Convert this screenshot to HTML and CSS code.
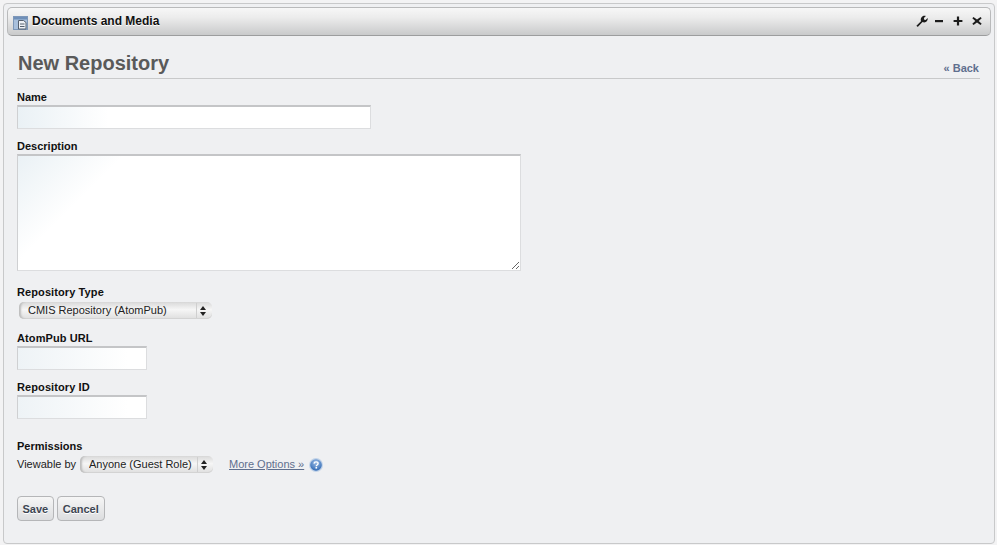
FILE: index.html
```html
<!DOCTYPE html>
<html lang="en">
<head>
<meta charset="utf-8">
<title>Documents and Media</title>
<link rel="stylesheet" href="styles.css">
</head>
<body>
<div class="portlet">
  <header class="titlebar">
    <div class="title">
      <svg class="portlet-icon" width="15" height="14" viewBox="0 0 15 14">
        <rect x="0.5" y="0.5" width="14" height="13" fill="#a9c0dc" stroke="#7d97b8"/>
        <rect x="1" y="1" width="13" height="2.500" fill="#6f8fb8"/>
        <path d="M5.500 4.500h5l2.500 2v6.500H5.500z" fill="#eef1f5" stroke="#55606e"/>
        <path d="M7 8h4.500M7 10.500h4.500" stroke="#55606e"/>
      </svg>
      <h1>Documents and Media</h1>
    </div>
    <div class="controls">
      <svg width="12" height="12" viewBox="0 0 12 12"><path d="M1.200 11.600 0.400 10.800 5 6.200C4.300 4.200 5 2 7 1.100 8 .7 9 .7 9.900 1.100L7.900 3.100 8.200 4.700 9.700 5 11.600 3.100C12 4.500 11.400 6 10.200 6.800 9 7.600 7.700 7.600 6.500 7.100L2.200 11.400C1.900 11.800 1.500 11.900 1.200 11.600Z" fill="#1c1c1c"/></svg>
      <svg width="10" height="12" viewBox="0 0 10 12"><path d="M1 5h8v2.200H1z" fill="#1c1c1c"/></svg>
      <svg width="10" height="12" viewBox="0 0 10 12"><path d="M3.900 1.600h2.200v3.300h3.300v2.200H6.100v3.300H3.900V7.100H.6V4.900h3.300z" fill="#1c1c1c"/></svg>
      <svg width="10" height="12" viewBox="0 0 10 12"><path d="M1.500 2 5 4.500 8.500 2 9.700 3.300 6.700 6 9.700 8.700 8.500 10 5 7.500 1.500 10 .3 8.700 3.300 6 .3 3.300z" fill="#1c1c1c"/></svg>
    </div>
  </header>
  <main class="content">
    <div class="page-head">
      <h2>New Repository</h2>
      <a class="back" href="#">« Back</a>
    </div>
    <form class="form">
      <div class="field">
        <label for="name">Name</label>
        <input id="name" class="text wide" type="text">
      </div>
      <div class="field">
        <label for="desc">Description</label>
        <textarea id="desc" class="area"></textarea>
      </div>
      <div class="field field-type">
        <label for="type" class="wider">Repository Type</label>
        <div class="select-wrap type-select">
          <select id="type"><option>CMIS Repository (AtomPub)</option></select>
          <svg class="arrows" width="6" height="10" viewBox="0 0 6 10"><path d="M3 0 6 4H0zM3 10 0 6h6z" fill="#222"/></svg>
        </div>
      </div>
      <div class="field field-url">
        <label for="url" class="wider">AtomPub URL</label>
        <input id="url" class="text short" type="text">
      </div>
      <div class="field">
        <label for="rid" class="wider">Repository ID</label>
        <input id="rid" class="text short" type="text">
      </div>
      <div class="field field-perm">
        <label for="view">Permissions</label>
        <div class="perm-row">
          <span class="view-label">Viewable by</span>
          <div class="select-wrap view-select">
            <select id="view"><option>Anyone (Guest Role)</option></select>
            <svg class="arrows" width="6" height="10" viewBox="0 0 6 10"><path d="M3 0 6 4H0zM3 10 0 6h6z" fill="#222"/></svg>
          </div>
          <a class="more" href="#">More Options »</a>
          <svg class="help" width="14" height="14" viewBox="0 0 14 14">
            <defs><radialGradient id="hg" cx="50%" cy="30%" r="70%"><stop offset="0" stop-color="#9dbde6"/><stop offset="1" stop-color="#2f69b4"/></radialGradient></defs>
            <circle cx="7" cy="7" r="7" fill="#c2d3e8"/>
            <circle cx="7" cy="7" r="5.800" fill="url(#hg)"/>
            <path d="M5 5.600C5.100 4.400 6 3.900 7.100 3.900 8.300 3.900 9.100 4.600 9.100 5.600 9.100 7 7.300 6.900 7.300 8.200" fill="none" stroke="#fff" stroke-width="1.400"/>
            <rect x="6.500" y="9" width="1.600" height="1.600" fill="#fff"/>
          </svg>
        </div>
      </div>
      <div class="buttons">
        <button type="button" class="btn btn-save">Save</button>
        <button type="button" class="btn">Cancel</button>
      </div>
    </form>
  </main>
</div>
</body>
</html>
```
FILE: styles.css
```css
* { box-sizing: border-box; }
html, body { margin: 0; height: 100%; }
body {
  background: #f3f3f4;
  font-family: "Liberation Sans", Arial, sans-serif;
  font-size: 11px;
  color: #222;
  padding: 3px 2px 1px 3px;
  overflow: hidden;
}
.portlet {
  height: 541px;
  background: #eff0f2;
  border: 1px solid #c8c9ca;
  border-radius: 4px;
  padding: 3px;
}
.titlebar {
  height: 29px;
  display: flex;
  justify-content: space-between;
  align-items: center;
  padding: 0 8px 1px 5px;
  border: 1px solid #b9babb;
  border-bottom-color: #9c9d9e;
  border-radius: 5px;
  background: linear-gradient(#f7f7f7, #ececec 35%, #c9cacb);
}
.title { display: flex; align-items: center; gap: 4px; }
.portlet-icon { margin-top: 3px; }
.title h1 {
  margin: 0;
  font-size: 12px;
  font-weight: bold;
  color: #111;
  text-shadow: 0 1px 0 #fff;
}
.controls { display: flex; align-items: center; gap: 9px; }
.controls svg:first-child { margin-right: -3px; }
.content { padding: 0 11px 0 10px; }
.page-head {
  height: 43px;
  display: flex;
  justify-content: space-between;
  align-items: flex-end;
  border-bottom: 1px solid #c8c9ca;
  padding: 0 1px 3px 1px;
}
.page-head h2 {
  margin: 0;
  font-size: 20px;
  line-height: 24px;
  font-weight: bold;
  color: #5a5a5a;
}
.back {
  font-size: 11px;
  font-weight: bold;
  color: #5f6f8e;
  text-decoration: none;
  line-height: 13px;
}
.form { padding-top: 12px; }
.field { margin-bottom: 11px; }
.field label {
  display: block;
  height: 14px;
  line-height: 13px;
  font-weight: bold;
  color: #111;
}
.field label.wider { letter-spacing: .1px; }
.text, .area {
  display: block;
  border: 1px solid #dcdddf;
  border-top: 2px solid #c4c5c7;
  border-left-color: #cfd0d2;
  outline: 0;
  padding: 0;
  margin: 0;
}
.text {
  height: 24px;
  background: linear-gradient(90deg, #eaf1f5, #fff 90px);
}
.short { background: linear-gradient(90deg, #eef3f6, #fff 110px); }
.wide { width: 354px; }
.short { width: 130px; }
.area {
  width: 504px;
  height: 117px;
  background: linear-gradient(135deg, #eaf1f5, #fff 75px);
}
.field-type { margin-top: 15px; margin-bottom: 13px; }
.field-type label { margin-bottom: 2px; }
.select-wrap { position: relative; }
.select-wrap select {
  appearance: none;
  -webkit-appearance: none;
  display: block;
  width: 100%;
  height: 17px;
  border: 0;
  border-radius: 5px;
  font-family: "Liberation Sans", Arial, sans-serif;
  font-size: 11px;
  color: #222;
  background: linear-gradient(#d9d9d9, #f6f6f6 45%, #dedede);
  box-shadow: inset 3px 0 2px -1px #bdbdbd, inset 0 -1px 0 #d4d4d4;
  outline: 0;
  line-height: 15px;
}
.type-select { width: 193px; margin-left: 2px; }
.type-select select { padding: 0 18px 0 9px; }
.view-select { width: 133px; }
.view-select select { padding: 0 18px 1px 9px; }
.select-wrap::after {
  content: "";
  position: absolute;
  right: 15px;
  top: 1px;
  bottom: 1px;
  border-left: 1px solid #cfcfcf;
}
.arrows { position: absolute; right: 6px; top: 4px; }
.field-perm { margin-top: 21px; margin-bottom: 23px; }
.field-perm label { margin-bottom: 2px; }
.perm-row { display: flex; align-items: center; height: 17px; }
.view-label { width: 63px; color: #222; margin-top: -2px; }
.more { margin-left: 16px; color: #5f6f8e; text-decoration: underline; margin-top: -2px; }
.help { margin-left: 5px; margin-top: 1px; }
.buttons { display: flex; gap: 3px; }
.btn {
  height: 25px;
  padding: 0 5px;
  font-family: "Liberation Sans", Arial, sans-serif;
  font-size: 11px;
  font-weight: bold;
  color: #3d4652;
  border: 1px solid #b5b6b8;
  border-radius: 4px;
  background: linear-gradient(#f6f6f6, #dcdddf);
  text-shadow: 0 1px 0 #fff;
}
.btn-save { padding: 0 4.5px; }
```
